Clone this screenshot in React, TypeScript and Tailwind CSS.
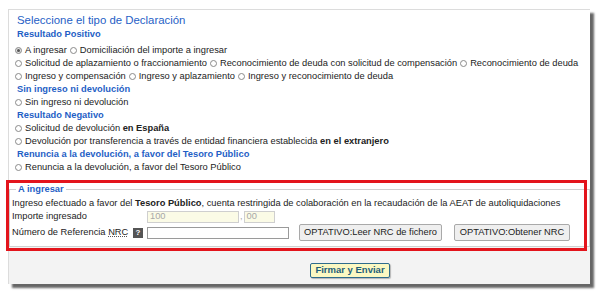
import type { ReactNode } from 'react';

const FONT = { fontFamily: '"Liberation Sans", Arial, sans-serif' };

function Radio({ checked = false, children }: { checked?: boolean; children: ReactNode }) {
    return (
        <span className="inline-flex items-center gap-[3px] mr-[3px]">
            <span
                className={`inline-flex h-[7px] w-[7px] items-center justify-center rounded-full border border-[#8a8a8a] ${
                    checked ? 'bg-[#e2e2e2]' : 'bg-white'
                }`}
            >
                {checked && <span className="h-[3px] w-[3px] rounded-full bg-[#555]" />}
            </span>
            <span>{children}</span>
        </span>
    );
}

function Heading({ children, className = '' }: { children: ReactNode; className?: string }) {
    return (
        <div className={`pl-[8px] text-[9.3px] font-bold leading-[13px] text-[#1f5fc6] ${className}`}>
            {children}
        </div>
    );
}

function Row({ children }: { children: ReactNode }) {
    return <div className="flex flex-wrap pl-[6px] leading-[13px]">{children}</div>;
}

export default function App() {
    return (
        <div className="min-h-[296px] bg-white pl-[8px] pt-[9px] text-[9.3px] text-[#222]" style={FONT}>
            <div className="relative w-[582px] border-l border-t border-[#dcdcdc] shadow-[4px_4px_2px_rgba(0,0,0,0.6)]">
                <div className="bg-white pt-[2px]">
                    <div className="pl-[8px] text-[11.4px] leading-[16px] text-[#1f5fc6]">
                        Seleccione el tipo de Declaración
                    </div>
                    <Heading className="mb-[3px]">Resultado Positivo</Heading>
                    <Row>
                        <Radio checked>A ingresar</Radio>
                        <Radio>Domiciliación del importe a ingresar</Radio>
                    </Row>
                    <Row>
                        <Radio>Solicitud de aplazamiento o fraccionamiento</Radio>
                        <Radio>Reconocimiento de deuda con solicitud de compensación</Radio>
                        <Radio>Reconocimiento de deuda</Radio>
                    </Row>
                    <Row>
                        <Radio>Ingreso y compensación</Radio>
                        <Radio>Ingreso y aplazamiento</Radio>
                        <Radio>Ingreso y reconocimiento de deuda</Radio>
                    </Row>
                    <Heading>Sin ingreso ni devolución</Heading>
                    <Row>
                        <Radio>Sin ingreso ni devolución</Radio>
                    </Row>
                    <Heading>Resultado Negativo</Heading>
                    <Row>
                        <Radio>
                            Solicitud de devolución <b>en España</b>
                        </Radio>
                    </Row>
                    <Row>
                        <Radio>
                            Devolución por transferencia a través de entidad financiera establecida{' '}
                            <b>en el extranjero</b>
                        </Radio>
                    </Row>
                    <Heading>Renuncia a la devolución, a favor del Tesoro Público</Heading>
                    <Row>
                        <Radio>Renuncia a la devolución, a favor del Tesoro Público</Radio>
                    </Row>

                    <fieldset className="mt-[9px] border border-[#d0d0d0] pb-[5px] pl-[2px]">
                        <legend className="ml-[4px] px-[2px] text-[9.3px] font-bold leading-[13px] text-[#1f5fc6]">
                            A ingresar
                        </legend>
                        <div className="leading-[14px]">
                            Ingreso efectuado a favor del <b>Tesoro Público</b>, cuenta restringida de
                            colaboración en la recaudación de la AEAT de autoliquidaciones
                        </div>
                        <div className="flex h-[14px] items-center">
                            <span className="w-[135px]">Importe ingresado</span>
                            <span className="flex h-[12px] w-[92px] items-center border border-[#cfcfcf] bg-[#fbfbe6] pl-[2px] text-[#a8a8a8]">
                                100
                            </span>
                            <span className="px-[1px] text-[#a8a8a8]">,</span>
                            <span className="flex h-[12px] w-[31px] items-center border border-[#cfcfcf] bg-[#fbfbe6] pl-[2px] text-[#a8a8a8]">
                                00
                            </span>
                        </div>
                        <div className="flex h-[17px] items-center">
                            <span className="w-[121px]">
                                Número de Referencia{' '}
                                <span className="underline decoration-dotted decoration-[#555]">NRC</span>
                            </span>
                            <span className="flex h-[10px] w-[10px] items-center justify-center bg-[#555] text-[8px] font-bold leading-none text-white">
                                ?
                            </span>
                            <span className="ml-[4px] h-[12px] w-[142px] border border-[#9a9a9a] bg-white" />
                            <button className="ml-[10px] flex h-[17px] w-[143px] items-center justify-center rounded-[2px] border border-[#a9a9a9] bg-[#efefef] text-[9.3px] text-[#222]">
                                OPTATIVO:Leer NRC de fichero
                            </button>
                            <button className="ml-[12px] flex h-[17px] w-[116px] items-center justify-center rounded-[2px] border border-[#a9a9a9] bg-[#efefef] text-[9.3px] text-[#222]">
                                OPTATIVO:Obtener NRC
                            </button>
                        </div>
                    </fieldset>
                </div>

                <div className="h-[37px] bg-[#f3f3f3] pl-[301px] pt-[16px]">
                    <button className="flex h-[15px] w-[80px] items-center justify-center rounded-[2px] border border-[#2f6c8c] bg-[#fbf8c2] text-[9.5px] font-bold text-[#1d5e7a] shadow-[1px_1px_1px_rgba(0,0,0,0.25)]">
                        Firmar y Enviar
                    </button>
                </div>

                <div className="pointer-events-none absolute left-[-3px] top-[170px] h-[71px] w-[581px] border-[3px] border-[#e3141c]" />
            </div>
        </div>
    );
}
